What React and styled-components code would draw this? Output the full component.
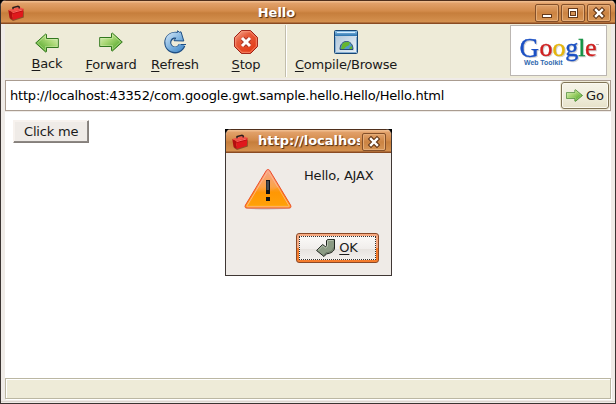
import React from "react";
import styled, { createGlobalStyle, css } from "styled-components";

const Global = createGlobalStyle`
  * { box-sizing: border-box; }
  html, body { margin: 0; padding: 0; }
  body {
    width: 616px; height: 404px; overflow: hidden; background: #000;
    font: 13px/16px "DejaVu Sans", sans-serif; color: #1a1a1a;
    letter-spacing: -0.19px;
  }
  svg { display: block; flex: none; }
`;

const Window = styled.div`
  position: relative;
  width: 616px;
  height: 404px;
  display: flex;
  flex-direction: column;
  overflow: hidden;
  background: #efebe7;
  border: 1px solid #3b3432;
  border-top: 0;
  border-radius: 6px 6px 0 0;
`;

const titleSkin = css`
  background: linear-gradient(#4f2f1c 0 1px, #efbb8c 1px 2px, #e2a16a 3px, #d38b4b 11px, #c67e3c 13px, #d5914f 22px, #8a4b22 23px);
  color: #fff;
  font-weight: bold;
  letter-spacing: 0;
  text-shadow: 1px 1px 1px #4b2a12;
`;

const TitleBar = styled.header`
  ${titleSkin}
  height: 24px;
  flex: none;
  display: grid;
  grid-template-columns: 84px 1fr 84px;
  align-items: center;
  padding: 1px 4px 0 7px;
`;

const TitleText = styled.div`
  text-align: center;
  padding-right: 66px;
`;

const WindowButtons = styled.div`
  display: flex;
  justify-content: flex-end;
  gap: 2px;
`;

const FrameButton = styled.div`
  width: 24px;
  height: 18px;
  flex: none;
  border: 1px solid #84502a;
  border-radius: 2px;
  background: linear-gradient(#e1a26c, #cb8342 50%, #d79656);
  box-shadow: inset 0 0 0 1px #e5ad78;
`;

const Toolbar = styled.nav`
  height: 54px;
  flex: none;
  margin: 0 4px;
  padding: 6px 0 0 10px;
  display: flex;
  background: #eeebd8;
`;

const Tool = styled.div`
  width: ${(p) => p.$w || 64}px;
  flex: none;
  margin-left: ${(p) => p.$gap || 0}px;
  display: flex;
  flex-direction: column;
  align-items: center;
  gap: 3px;
  white-space: nowrap;
`;

const ToolLabel = styled.span`
  margin-top: ${(p) => p.$up || 0}px;
`;

const Key = styled.span`
  text-decoration: underline;
  text-decoration-thickness: 1px;
  text-underline-offset: 2px;
  text-decoration-skip-ink: none;
`;

const Separator = styled.div`
  width: 2px;
  height: 52px;
  margin: -5px 0 0 7px;
  border-left: 1px solid #c2beac;
  border-right: 1px solid #fff;
`;

const LogoBox = styled.div`
  width: 97px;
  height: 51px;
  margin: -5px 4px 0 auto;
  background: #fff;
  border: 1px solid #bbb6b2;
`;

const AddressBar = styled.div`
  height: 31px;
  flex: none;
  margin: 2px 4px 0;
  padding: 0 1px 0 4px;
  display: flex;
  align-items: center;
  background: #fff;
  border: 1px solid #aa9c90;
`;

const Url = styled.div`
  flex: 1;
  color: #000;
  white-space: nowrap;
`;

const GoButton = styled.div`
  width: 48px;
  height: 27px;
  flex: none;
  display: flex;
  align-items: center;
  gap: 3px;
  padding-left: 4px;
  border: 1px solid #807455;
  border-radius: 3px;
  background: linear-gradient(#f6f4e9, #eeecd9 60%, #e6e2c9);
  box-shadow: inset 0 0 0 1px #faf9f0, 0 0 0 1px #efebd7;
`;

const Page = styled.main`
  height: 266px;
  flex: none;
  margin: 1px 4px 0;
  padding: 8px 8px;
  background: #fff;
`;

const ClickButton = styled.div`
  width: 76px;
  height: 23px;
  padding: 3px 0 0 10px;
  background: #efebe7;
  border: 1px solid;
  border-color: #f7f2ee #857f7b #857f7b #f7f2ee;
  box-shadow: inset -1px -1px #8d8884, inset 1px 1px #f7f2ee;
  white-space: nowrap;
`;

const StatusBar = styled.footer`
  height: 21px;
  flex: none;
  width: 606px;
  margin: 0 4px;
  background: #eeebd8;
  border: 1px solid #bbb7a2;
  box-shadow: inset 1px 1px #fff, 1px 1px #fff;
`;

const BottomEdge = styled.div`
  height: 1px;
  margin-top: 2px;
  background: #dcd5cf;
`;

const DialogFrame = styled.section`
  position: absolute;
  left: 224px;
  top: 129px;
  width: 167px;
  height: 147px;
  background: #000;
`;

const Dialog = styled.div`
  height: 147px;
  overflow: hidden;
  border-radius: 6px 6px 0 0;
  border: 1px solid #3f3734;
  border-top: 0;
  background: #efebe7;
`;

const DialogTitle = styled.header`
  ${titleSkin}
  height: 24px;
  display: flex;
  align-items: center;
  padding: 1px 4px 0 6px;
`;

const ClippedTitle = styled.div`
  width: 102px;
  flex: none;
  overflow: hidden;
  white-space: nowrap;
  margin: -1px 2px 0 10px;
`;

const DialogBody = styled.div`
  height: 80px;
  display: flex;
  align-items: flex-start;
  padding: 15px 0 0 18px;
`;

const Message = styled.div`
  margin-left: 12px;
  white-space: nowrap;
`;

const OkButton = styled.div`
  width: 83px;
  height: 30px;
  margin-left: 70px;
  padding: 2px;
  border: 1px solid #8b4927;
  border-radius: 3px;
  background: linear-gradient(#f6a981 0 50%, #f47b2c 50%);
`;

const OkFace = styled.div`
  height: 24px;
  display: flex;
  align-items: center;
  justify-content: center;
  gap: 3px;
  padding-right: 1px;
  background: linear-gradient(#faf9f7, #f0edeb 55%, #e7e3df 56%, #f2efec) padding-box, #f6f3f0;
  border: 1px dotted #333;
`;

const Toolbox = () => (
  <svg width="16" height="16" viewBox="0 0 16 16">
    <path d="M1.500 13.500 5 16l10.800-3.500V6z" fill="#4a1a0c" opacity=".5" />
    <path d="M.3 5 4 6.800l.7 8.200L1.500 12.800z" fill="#b30e10" />
    <path d="m4 6.800 11.500-3-.7 8L4.700 15z" fill="#e0181c" />
    <path d="m.3 5 11-3 4.200 1.800L4 6.800z" fill="#f4534a" />
    <path d="M5 4.200V2.500l5-1.200 1.200.6v1.500" fill="none" stroke="#2b1a1c" strokeWidth="1.400" />
    <path d="m4.200 8.700 11-3" stroke="#b00d10" strokeWidth=".7" />
    <path d="m4.700 7.500 10-2.600" stroke="#ff8478" strokeWidth=".8" />
  </svg>
);

const Minimise = () => (
  <svg width="22" height="16" viewBox="0 0 22 16">
    <path d="M6 9h10v4H6z" fill="#65391a" /><path d="M7 10h8v2H7z" fill="#fff" />
  </svg>
);
const Maximise = () => (
  <svg width="22" height="16" viewBox="0 0 22 16" fill="none" shapeRendering="crispEdges">
    <path d="M6 3h10v10H6z" fill="#65391a" /><path d="M7 4h8v8H7z" fill="#fff" />
    <path d="M8 6h6v5H8z" fill="#65391a" /><path d="M9 7h4v3H9z" fill="#d49357" />
  </svg>
);
const Close = () => (
  <svg width="22" height="16" viewBox="0 0 22 16" fill="none" strokeLinecap="square">
    <path d="m8 5 6 6m0-6-6 6" stroke="#65391a" strokeWidth="4.600" />
    <path d="m8 5 6 6m0-6-6 6" stroke="#fff" strokeWidth="2.400" />
  </svg>
);

const Arrow = ({ id, back, w = 24, h = 24, box = "0 0 24 24" }) => (
  <svg width={w} height={h} viewBox={box} preserveAspectRatio="none">
    <defs>
      <linearGradient id={id} x1="0" y1="0" x2="1" y2="1">
        <stop stopColor="#e4f5c6" /><stop offset=".4" stopColor="#a9d774" /><stop offset=".8" stopColor="#5fae35" /><stop offset="1" stopColor="#4a9a25" />
      </linearGradient>
    </defs>
    <g transform={back ? "matrix(-1 0 0 1 24 0)" : undefined}>
      <path d="M.7 7.500h11.800v-4l.9-.4L23.300 12l-9.900 9-.9-.4v-4.100H.7z" fill={`url(#${id})`} stroke="#33781f" strokeLinejoin="round" />
      <path d="M1.700 8.500h11.800V4.800l8 7.200-8 7.200v-3.700H1.700z" fill="none" stroke="#e3f6c8" strokeWidth=".8" opacity=".45" />
    </g>
  </svg>
);

const Refresh = () => (
  <svg width="24" height="24" viewBox="0 0 24 24">
    <defs>
      <linearGradient id="refresh-fill" gradientUnits="userSpaceOnUse" x1="3" y1="3" x2="20" y2="22">
        <stop stopColor="#cfe4f6" /><stop offset=".5" stopColor="#82b5e0" /><stop offset="1" stopColor="#3f86c8" />
      </linearGradient>
    </defs>
    <path d="M16 6.500A7.300 7.300 0 1 0 19 15" fill="none" stroke="#1f4f84" strokeWidth="7" />
    <path d="m14.500.8 2 1.500 1.500-.5 2.800 9.200-9.800-.3 2-3z" fill="url(#refresh-fill)" stroke="#1f4f84" strokeLinejoin="round" />
    <path d="M16 6.200A7.300 7.300 0 1 0 18.900 14.500" fill="none" stroke="url(#refresh-fill)" strokeWidth="5" />
    <path d="M17.800 14.500h5.200" stroke="#1f4f84" />
  </svg>
);

const Stop = () => (
  <svg width="24" height="24" viewBox="0 0 24 24">
    <defs>
      <linearGradient id="stop-fill" x1="0" y1="0" x2=".7" y2="1">
        <stop stopColor="#f5b29d" /><stop offset=".4" stopColor="#e75b3b" /><stop offset="1" stopColor="#e33b16" />
      </linearGradient>
    </defs>
    <path d="M7.400.6h9.200l6.800 6.800v9.200l-6.800 6.800H7.400L.6 16.600V7.400z" fill="url(#stop-fill)" stroke="#9b1c12" />
    <path d="M7.800 1.700h8.400l6.100 6.100v8.400l-6.100 6.100H7.800l-6.100-6.100V7.800z" fill="none" stroke="#ff9c7d" opacity=".8" />
    <path d="m8.500 8.500 7 7m0-7-7 7" stroke="#a93526" strokeWidth="4.800" />
    <path d="m8 8 8 8m0-8-8 8" stroke="#fff" strokeWidth="3" />
  </svg>
);

const Browser = () => (
  <svg width="24" height="24" viewBox="0 0 24 24">
    <defs>
      <linearGradient id="browser-bar" x2="0" y2="1"><stop stopColor="#94c6e9" /><stop offset="1" stopColor="#2871ad" /></linearGradient>
      <linearGradient id="browser-body" x2="1" y2="1"><stop stopColor="#a5bfd5" /><stop offset="1" stopColor="#f0f5f9" /></linearGradient>
    </defs>
    <rect x=".5" y=".5" width="23" height="23" rx="1" fill="url(#browser-body)" stroke="#174675" />
    <path d="M1 1h22v5H1z" fill="url(#browser-bar)" /><path d="M3 2.500h18" stroke="#d6edff" />
    <path d="M1.500 7v15.500h21V7" fill="none" stroke="#86afd3" />
    <path d="M6 19.500c0-5 2.800-8 6.500-8s6.500 3 6.500 8z" fill="#5299cb" stroke="#294e70" />
    <path d="m9 13 3-1 4 .3-1 3-3 1.500-2 2.200H7l1-4zm7 4 2-1v3h-3z" fill="#65b62d" />
    <path d="M5 20.500h15" stroke="#d5e4ef" />
  </svg>
);

const LogoText = styled.text`
  font: ${(p) => p.$size || 26}px "Liberation Serif", serif;
  letter-spacing: 0;
  stroke-width: 0.4px;
  filter: drop-shadow(1px 1px 0.5px rgba(70, 70, 70, 0.25));
`;
const LogoSub = styled.text`
  font: bold 8px "Liberation Sans", sans-serif;
  letter-spacing: 0;
  fill: #2f68ae;
`;

const letters = [["o", 28.500, "#cf2020"], ["o", 41.500, "#e5b50b"], ["g", 54.300, "#1b50c4"], ["l", 67.300, "#169245"], ["e", 74, "#cf2020"]];

const Logo = () => (
  <svg width="95" height="49" viewBox="0 0 95 49">
    <LogoText $size={28} x="8.500" y="30.500" fill="#1b50c4" stroke="#1b50c4" textLength="19.500" lengthAdjust="spacingAndGlyphs">G</LogoText>
    <LogoText y="30">
      {letters.map(([c, x, color]) => <tspan key={x} x={x} fill={color} stroke={color}>{c}</tspan>)}
    </LogoText>
    <path d="M85 18.500h3" stroke="#999" strokeWidth=".7" />
    <LogoSub x="13" y="39" textLength="38.500" lengthAdjust="spacingAndGlyphs">Web Toolkit</LogoSub>
  </svg>
);

const Warning = () => (
  <svg width="48" height="42" viewBox="0 0 48 42">
    <defs>
      <linearGradient id="warn-fill" x2="0" y2="1">
        <stop stopColor="#f4a38a" /><stop offset=".45" stopColor="#fba349" /><stop offset=".6" stopColor="#ff9608" /><stop offset="1" stopColor="#ffaa13" />
      </linearGradient>
    </defs>
    <ellipse cx="24" cy="40" rx="23" ry="1.500" fill="#c4beb9" />
    <path d="M22 3c1-2 3-2 4 0l20.500 34c1 2 .3 3-1.500 3H3c-1.800 0-2.500-1-1.500-3z" fill="url(#warn-fill)" stroke="#ed4b2c" />
    <path d="M23 4.500c.6-1.200 1.400-1.200 2 0l19.800 33c.5 1 .1 1.300-.8 1.300H4c-.9 0-1.300-.3-.8-1.300z" fill="none" stroke="#ffb493" strokeWidth=".9" />
    <path d="M13 25c8 0 16-1 21-6l10 18H5z" fill="#ff9800" opacity=".45" />
    <path d="M22 12h4v14h-4zM22 29h4v4h-4z" fill="#111315" />
    <path d="M22.500 13h2.500v9h-2.500z" fill="#454c54" />
  </svg>
);

const Enter = () => (
  <svg width="20" height="18" viewBox="0 0 20 18">
    <path d="m.6 11.500 6-6 2.900 2.300 1-1.300v-5l1.300-1h6.700V9c0 3-3.500 5.500-8 5.800L8 17.500z" fill="#8b9b83" stroke="#1f241e" strokeLinejoin="round" />
    <path d="m2 11.300 4.700-4.500L9.500 9c1.500-.6 2-1.500 2-3V2l.8-.6h5" fill="none" stroke="#bcc7b6" strokeWidth=".9" />
    <path d="m8.200 15.800 1.700-2c4.300-.3 7.200-2 7.600-5.300" fill="none" stroke="#637160" strokeWidth=".9" />
  </svg>
);

export default function App() {
  return (
    <>
      <Global />
      <Window>
        <TitleBar>
          <Toolbox />
          <TitleText>Hello</TitleText>
          <WindowButtons>
            <FrameButton><Minimise /></FrameButton>
            <FrameButton><Maximise /></FrameButton>
            <FrameButton><Close /></FrameButton>
          </WindowButtons>
        </TitleBar>
        <Toolbar>
          <Tool><Arrow id="back-fill" back h={26} box="0 -1 24 26" /><ToolLabel $up={-3}><Key>B</Key>ack</ToolLabel></Tool>
          <Tool><Arrow id="forward-fill" /><ToolLabel><Key>F</Key>orward</ToolLabel></Tool>
          <Tool><Refresh /><ToolLabel><Key>R</Key>efresh</ToolLabel></Tool>
          <Tool $gap={7}><Stop /><ToolLabel><Key>S</Key>top</ToolLabel></Tool>
          <Separator />
          <Tool $w={102} $gap={8}><Browser /><ToolLabel><Key>C</Key>ompile/Browse</ToolLabel></Tool>
          <LogoBox><Logo /></LogoBox>
        </Toolbar>
        <AddressBar>
          <Url>http://localhost:43352/com.google.gwt.sample.hello.Hello/Hello.html</Url>
          <GoButton><Arrow id="go-fill" w={17} h={13} box="0 2 24 20" />Go</GoButton>
        </AddressBar>
        <Page><ClickButton>Click me</ClickButton></Page>
        <StatusBar />
        <BottomEdge />
        <DialogFrame>
          <Dialog>
            <DialogTitle>
              <Toolbox />
              <ClippedTitle>http://localhost:43352</ClippedTitle>
              <FrameButton><Close /></FrameButton>
            </DialogTitle>
            <DialogBody><Warning /><Message>Hello, AJAX</Message></DialogBody>
            <OkButton><OkFace><Enter /><span><Key>O</Key>K</span></OkFace></OkButton>
          </Dialog>
        </DialogFrame>
      </Window>
    </>
  );
}
